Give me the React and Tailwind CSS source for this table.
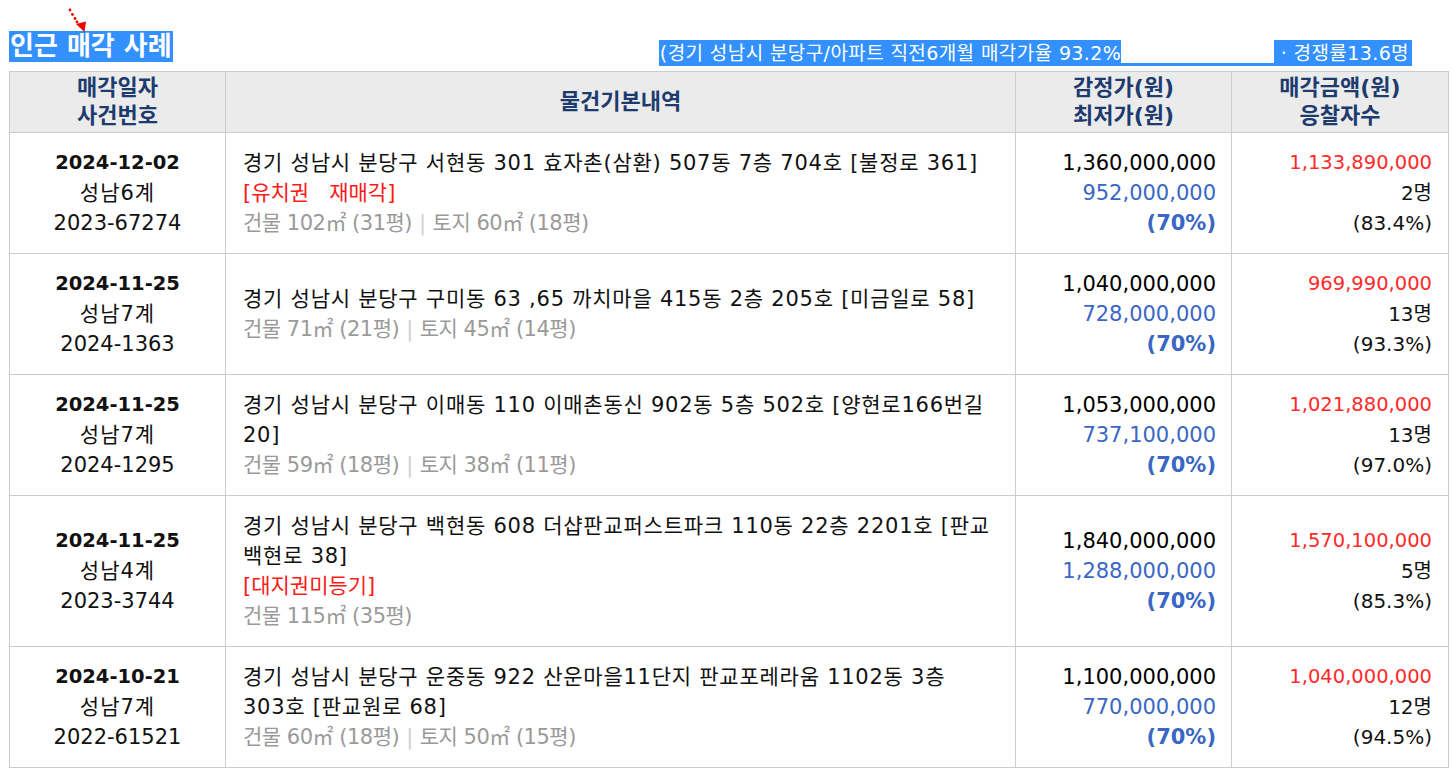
import React from "react";

const rows = [
  {
    date: "2024-12-02",
    court: "성남6계",
    caseNo: "2023-67274",
    addr: "경기 성남시 분당구 서현동 301 효자촌(삼환) 507동 7층 704호 [불정로 361]",
    tags: "[유치권\u00a0\u00a0\u00a0재매각]",
    building: "건물 102㎡ (31평)",
    land: "토지 60㎡ (18평)",
    appraisal: "1,360,000,000",
    minimum: "952,000,000",
    sale: "1,133,890,000",
    bidders: "2명",
    ratio: "(83.4%)",
  },
  {
    date: "2024-11-25",
    court: "성남7계",
    caseNo: "2024-1363",
    addr: "경기 성남시 분당구 구미동 63 ,65 까치마을 415동 2층 205호 [미금일로 58]",
    building: "건물 71㎡ (21평)",
    land: "토지 45㎡ (14평)",
    appraisal: "1,040,000,000",
    minimum: "728,000,000",
    sale: "969,990,000",
    bidders: "13명",
    ratio: "(93.3%)",
  },
  {
    date: "2024-11-25",
    court: "성남7계",
    caseNo: "2024-1295",
    addr: "경기 성남시 분당구 이매동 110 이매촌동신 902동 5층 502호 [양현로166번길 20]",
    building: "건물 59㎡ (18평)",
    land: "토지 38㎡ (11평)",
    appraisal: "1,053,000,000",
    minimum: "737,100,000",
    sale: "1,021,880,000",
    bidders: "13명",
    ratio: "(97.0%)",
  },
  {
    date: "2024-11-25",
    court: "성남4계",
    caseNo: "2023-3744",
    addr: "경기 성남시 분당구 백현동 608 더샵판교퍼스트파크 110동 22층 2201호 [판교백현로 38]",
    tags: "[대지권미등기]",
    building: "건물 115㎡ (35평)",
    appraisal: "1,840,000,000",
    minimum: "1,288,000,000",
    sale: "1,570,100,000",
    bidders: "5명",
    ratio: "(85.3%)",
  },
  {
    date: "2024-10-21",
    court: "성남7계",
    caseNo: "2022-61521",
    addr: "경기 성남시 분당구 운중동 922 산운마을11단지 판교포레라움 1102동 3층 303호 [판교원로 68]",
    building: "건물 60㎡ (18평)",
    land: "토지 50㎡ (15평)",
    appraisal: "1,100,000,000",
    minimum: "770,000,000",
    sale: "1,040,000,000",
    bidders: "12명",
    ratio: "(94.5%)",
  },
];

// red dotted pointer above the title
const Arrow = () => (
  <svg width="26" height="30" viewBox="0 0 26 30" className="absolute left-[64px] top-[4px]">
    <circle cx="6" cy="6" r="1.4" fill="#e00" />
    <circle cx="8.5" cy="10.5" r="1.4" fill="#e00" />
    <circle cx="11" cy="14.5" r="1.4" fill="#e00" />
    <circle cx="13" cy="18" r="1.4" fill="#e00" />
    <polygon points="12,20 22,17.5 20.5,28" fill="#e00" />
  </svg>
);

const cell = "border border-[#cccccc] align-middle";

export default function App() {
  return (
    <div
      className="relative w-[1452px] bg-white pt-[31px]"
      style={{ fontFamily: '"DejaVu Sans", "Noto Sans CJK KR", sans-serif' }}
    >
      <Arrow />
      <div className="flex items-end justify-between pl-[9px] pr-[40px]">
        <span className="bg-[#3390ff] px-[1px] text-[26px] font-bold leading-[31px] text-white">
          인근 매각 사례
        </span>
        <div className="mb-[-4px] flex items-end text-[19px] leading-[26px] tracking-[0.4px] text-white">
          <span className="bg-[#3390ff] pl-[1px]">(경기 성남시 분당구/아파트 직전6개월 매각가율 93.2%</span>
          <span className="flex h-[26px] w-[153px] flex-col">
            <span className="flex-1 bg-white" />
            <span className="h-[3px] bg-[#3390ff]" />
          </span>
          <span className="bg-[#3390ff] pr-[3px]">&nbsp;· 경쟁률13.6명</span>
        </div>
      </div>

      <table className="ml-[9px] mt-[9px] w-[1439px] table-fixed border-collapse text-[21px] leading-[30px]">
        <colgroup>
          <col className="w-[216px]" />
          <col className="w-[790px]" />
          <col className="w-[216px]" />
          <col className="w-[217px]" />
        </colgroup>
        <thead>
          <tr className="bg-[#ebebeb] text-[22px] leading-[28px] text-[#1d3b6e]">
            <th className={`${cell} py-[2px] font-bold`}>
              매각일자
              <br />
              사건번호
            </th>
            <th className={`${cell} font-bold`}>물건기본내역</th>
            <th className={`${cell} font-bold`}>
              감정가(원)
              <br />
              최저가(원)
            </th>
            <th className={`${cell} font-bold`}>
              매각금액(원)
              <br />
              응찰자수
            </th>
          </tr>
        </thead>
        <tbody>
          {rows.map((r, i) => (
            <tr key={i} className="text-[#111]">
              <td className={`${cell} py-[15px] text-center`}>
                <div className="text-[19.5px] font-bold">{r.date}</div>
                <div className="tracking-[1px]">{r.court}</div>
                <div>{r.caseNo}</div>
              </td>
              <td className={`${cell} py-[15px] pl-[17px] pr-[22px]`}>
                <div className="tracking-[0.75px]">{r.addr}</div>
                {r.tags && <div className="text-[#ff1a1a]">{r.tags}</div>}
                <div className="tracking-[-0.5px] text-[#9a9a9a]">
                  {r.building}
                  {r.land && (
                    <>
                      <span className="mx-[7px] text-[#d0d0d0]">|</span>
                      {r.land}
                    </>
                  )}
                </div>
              </td>
              <td className={`${cell} py-[15px] pr-[15px] text-right`}>
                <div className="text-black">{r.appraisal}</div>
                <div className="text-[#3a66c4]">{r.minimum}</div>
                <div className="font-bold text-[#3a66c4]">(70%)</div>
              </td>
              <td className={`${cell} py-[15px] pr-[16px] text-right text-[20px]`}>
                <div className="text-[19.5px] text-[#ff2a2a]">{r.sale}</div>
                <div>{r.bidders}</div>
                <div>{r.ratio}</div>
              </td>
            </tr>
          ))}
        </tbody>
      </table>
    </div>
  );
}
